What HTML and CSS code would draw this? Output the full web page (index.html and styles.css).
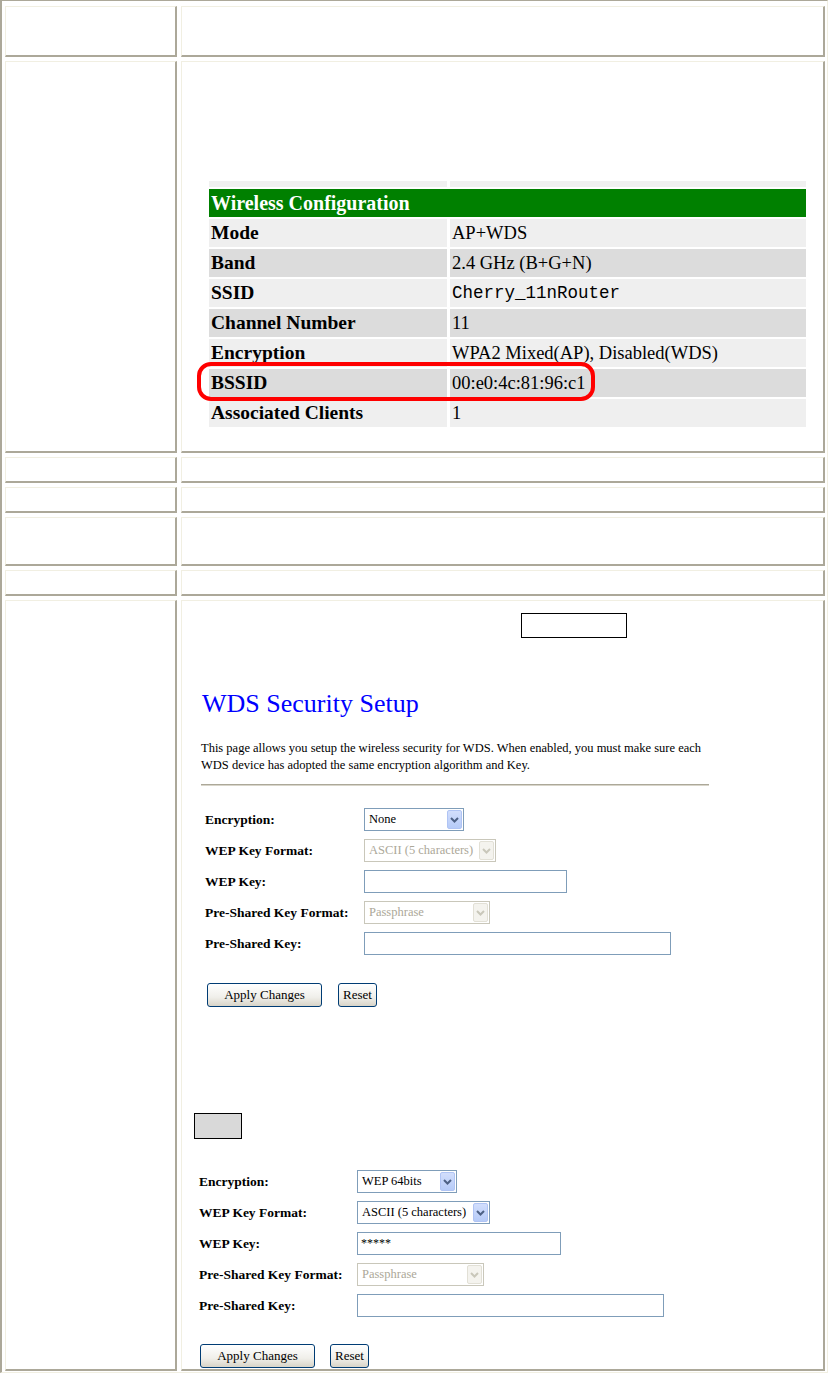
FILE: index.html
```html
<!DOCTYPE html>
<html lang="en">
<head>
    <meta charset="UTF-8">
    <meta name="viewport" content="width=device-width, initial-scale=1.0">
    <title>WDS Settings</title>
    <link rel="stylesheet" href="styles.css">
</head>
<body>
    <div class="doc">
        <div class="cell"></div>
        <div class="cell"></div>

        <div class="cell"></div>
        <div class="cell status-cell">
            <div class="status">
                <div class="strip"></div>
                <div class="strip"></div>
                <div class="status-head">Wireless Configuration</div>
                <div class="key light">Mode</div>
                <div class="value light">AP+WDS</div>
                <div class="key dark">Band</div>
                <div class="value dark">2.4 GHz (B+G+N)</div>
                <div class="key light">SSID</div>
                <div class="value light mono">Cherry_11nRouter</div>
                <div class="key dark">Channel Number</div>
                <div class="value dark">11</div>
                <div class="key light">Encryption</div>
                <div class="value light">WPA2 Mixed(AP), Disabled(WDS)</div>
                <div class="key dark">BSSID</div>
                <div class="value dark">00:e0:4c:81:96:c1</div>
                <div class="key light">Associated Clients</div>
                <div class="value light">1</div>
                <div class="ring"></div>
            </div>
        </div>

        <div class="cell"></div>
        <div class="cell"></div>

        <div class="cell"></div>
        <div class="cell"></div>

        <div class="cell"></div>
        <div class="cell"></div>

        <div class="cell"></div>
        <div class="cell"></div>

        <div class="cell"></div>
        <div class="cell setup-cell">
            <div class="note-box"></div>

            <h2 class="setup-title">WDS Security Setup</h2>
            <p class="setup-text">This page allows you setup the wireless security for WDS. When enabled, you must make sure each<br>WDS device has adopted the same encryption algorithm and Key.</p>
            <hr class="setup-rule">

            <div class="form form-first">
                <label>Encryption:</label>
                <div class="select w100"><span class="val">None</span><span class="arrow"><svg width="9" height="6" viewBox="0 0 9 6"><path d="M1 1 L4.5 4.5 L8 1" fill="none" stroke="#4d6185" stroke-width="2"/></svg></span></div>

                <label>WEP Key Format:</label>
                <div class="select off w132"><span class="val">ASCII (5 characters)</span><span class="arrow"><svg width="9" height="6" viewBox="0 0 9 6"><path d="M1 1 L4.5 4.5 L8 1" fill="none" stroke="#c9c7ba" stroke-width="2"/></svg></span></div>

                <label>WEP Key:</label>
                <input class="field w203" type="text" value="">

                <label>Pre-Shared Key Format:</label>
                <div class="select off w126"><span class="val">Passphrase</span><span class="arrow"><svg width="9" height="6" viewBox="0 0 9 6"><path d="M1 1 L4.5 4.5 L8 1" fill="none" stroke="#c9c7ba" stroke-width="2"/></svg></span></div>

                <label>Pre-Shared Key:</label>
                <input class="field w307" type="text" value="">
            </div>

            <div class="buttons buttons-first">
                <button class="btn apply">Apply Changes</button>
                <button class="btn reset">Reset</button>
            </div>

            <div class="gray-box"></div>

            <div class="form form-second">
                <label>Encryption:</label>
                <div class="select w100"><span class="val">WEP 64bits</span><span class="arrow"><svg width="9" height="6" viewBox="0 0 9 6"><path d="M1 1 L4.5 4.5 L8 1" fill="none" stroke="#4d6185" stroke-width="2"/></svg></span></div>

                <label>WEP Key Format:</label>
                <div class="select w133"><span class="val">ASCII (5 characters)</span><span class="arrow"><svg width="9" height="6" viewBox="0 0 9 6"><path d="M1 1 L4.5 4.5 L8 1" fill="none" stroke="#4d6185" stroke-width="2"/></svg></span></div>

                <label>WEP Key:</label>
                <input class="field w204" type="text" value="*****">

                <label>Pre-Shared Key Format:</label>
                <div class="select off w127"><span class="val">Passphrase</span><span class="arrow"><svg width="9" height="6" viewBox="0 0 9 6"><path d="M1 1 L4.5 4.5 L8 1" fill="none" stroke="#c9c7ba" stroke-width="2"/></svg></span></div>

                <label>Pre-Shared Key:</label>
                <input class="field w307" type="text" value="">
            </div>

            <div class="buttons buttons-second">
                <button class="btn apply">Apply Changes</button>
                <button class="btn reset">Reset</button>
            </div>
        </div>
    </div>
</body>
</html>
```

FILE: styles.css
```css
body {
    margin: 0;
    padding: 0;
    background: #fff;
    font-family: "Liberation Serif", "Times New Roman", serif;
    color: #000;
}

.doc {
    display: grid;
    grid-template-columns: 172px 644px;
    grid-template-rows: 51px 392px 26px 26px 49px 26px 771px;
    gap: 4px;
    width: max-content;
    padding: 5px 2px 1px 3px;
    border-style: solid;
    border-width: 1px 1px 1px 2px;
    border-color: #aca899 #f1efe2 #f1efe2 #aca899;
}

.cell {
    box-sizing: border-box;
    border-top: 1px solid #f1efe2;
    border-left: 1px solid #f1efe2;
    border-right: 2px solid #aca899;
    border-bottom: 2px solid #aca899;
}

/* wireless status picture */

.status-cell {
    padding: 119px 0 0 27px;
}

.status {
    position: relative;
    display: grid;
    grid-template-columns: 238px 356px;
    grid-template-rows: 6px repeat(8, 28px);
    column-gap: 3px;
    row-gap: 2px;
    font-size: 18.5px;
}

.strip {
    background: #f0f0f0;
}

.status-head {
    grid-column: 1 / span 2;
    background: #008000;
    color: #fff;
    font-weight: bold;
    font-size: 20px;
    display: flex;
    align-items: center;
    padding-left: 2px;
}

.key,
.value {
    display: flex;
    align-items: center;
    padding-left: 2px;
    white-space: nowrap;
}

.key {
    font-weight: bold;
    font-size: 19.5px;
}

.light {
    background: #efefef;
}

.dark {
    background: #dcdcdc;
}

.mono {
    font-family: "Liberation Mono", "Courier New", monospace;
    font-size: 17.5px;
}

.ring {
    position: absolute;
    left: -12px;
    top: 181px;
    width: 398px;
    height: 39px;
    box-sizing: border-box;
    border: 4px solid #ff0000;
    border-radius: 14px;
}

/* wds security picture */

.setup-cell {
    display: flex;
    flex-direction: column;
    align-items: flex-start;
}

.note-box {
    margin: 12px 0 0 339px;
    width: 106px;
    height: 25px;
    box-sizing: border-box;
    border: 1px solid #000;
}

.setup-title {
    margin: 52px 0 0 20px;
    font-size: 26px;
    line-height: 27px;
    font-weight: normal;
    color: #0000ff;
}

.setup-text {
    margin: 23px 0 0 19px;
    font-size: 12.5px;
    line-height: 17px;
    white-space: nowrap;
}

.setup-rule {
    margin: 10px 0 0 19px;
    width: 508px;
    height: 0;
    border: 0;
    border-top: 1px solid #aca899;
    border-bottom: 1px solid #d8d5ca;
}

.form {
    display: grid;
    grid-template-columns: 159px auto;
    grid-auto-rows: 23px;
    row-gap: 8px;
    align-items: center;
    justify-items: start;
    font-size: 13.5px;
}

.form label {
    font-weight: bold;
    white-space: nowrap;
}

.form-first {
    margin: 22px 0 0 23px;
}

.form-second {
    margin: 31px 0 0 17px;
    grid-template-columns: 158px auto;
}

.select {
    display: flex;
    height: 23px;
    box-sizing: border-box;
    border: 1px solid #7f9db9;
    background: #fff;
    font-size: 12.5px;
}

.select .val {
    flex: 1;
    display: flex;
    align-items: center;
    padding-left: 4px;
    white-space: nowrap;
    overflow: hidden;
}

.select .arrow {
    width: 15px;
    margin: 1px;
    box-sizing: border-box;
    border: 1px solid #b0c4f4;
    border-radius: 2px;
    background: linear-gradient(#d2defc, #b6cbf8);
    display: flex;
    align-items: center;
    justify-content: center;
}

.select.off {
    border-color: #c9c7ba;
    color: #aca899;
}

.select.off .arrow {
    border-color: #e2e0d6;
    background: #f4f3ee;
}

.field {
    height: 23px;
    box-sizing: border-box;
    margin: 0;
    padding: 0 3px;
    border: 1px solid #7f9db9;
    font-family: "Liberation Serif", "Times New Roman", serif;
    font-size: 12px;
    color: #000;
    outline: none;
}

.w100 { width: 100px; }
.w126 { width: 126px; }
.w127 { width: 127px; }
.w132 { width: 132px; }
.w133 { width: 133px; }
.w203 { width: 203px; }
.w204 { width: 204px; }
.w307 { width: 307px; }

.buttons {
    display: flex;
}

.buttons-first {
    margin: 28px 0 0 25px;
    gap: 16px;
}

.buttons-second {
    margin: 27px 0 0 18px;
    gap: 15px;
}

.btn {
    height: 24px;
    padding: 0;
    box-sizing: border-box;
    border: 1px solid #003c74;
    border-radius: 3px;
    background: linear-gradient(#ffffff, #f0efea 60%, #d8d4c8);
    font-family: "Liberation Serif", "Times New Roman", serif;
    font-size: 13px;
    color: #000;
}

.btn.apply {
    width: 115px;
}

.btn.reset {
    width: 39px;
}

.gray-box {
    margin: 106px 0 0 12px;
    width: 48px;
    height: 26px;
    box-sizing: border-box;
    border: 1px solid #000;
    background: #d9d9d9;
}
```
